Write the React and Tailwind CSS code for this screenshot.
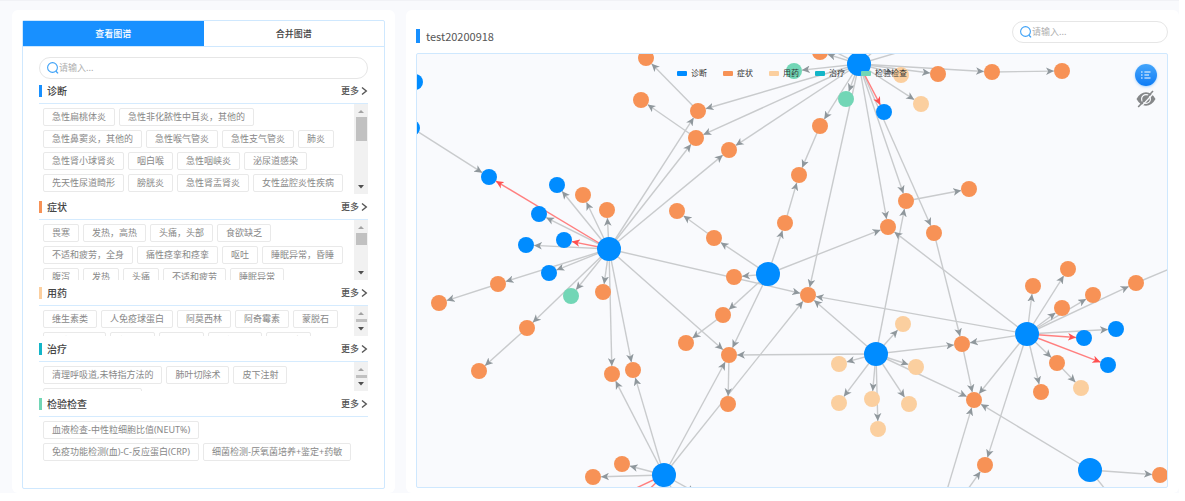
import React, { useState } from "react";
import clsx from "clsx";

const BLUE = "#008cff";
const ORANGE = "#f79256";
const PEACH = "#fbcf9f";
const GREEN = "#72d6b6";

const sections = [
  {
    title: "诊断",
    bar: "bg-[#1890ff]",
    height: "h-[90px]",
    thumb: "h-6",
    tags: [
      "急性扁桃体炎",
      "急性非化脓性中耳炎，其他的",
      "急性鼻窦炎，其他的",
      "急性喉气管炎",
      "急性支气管炎",
      "肺炎",
      "急性肾小球肾炎",
      "咽白喉",
      "急性咽峡炎",
      "泌尿道感染",
      "先天性尿道畸形",
      "膀胱炎",
      "急性肾盂肾炎",
      "女性盆腔炎性疾病",
    ],
  },
  {
    title: "症状",
    bar: "bg-[#f79256]",
    height: "h-[60px]",
    thumb: "h-3",
    tags: [
      "畏寒",
      "发热，高热",
      "头痛，头部",
      "食欲缺乏",
      "不适和疲劳，全身",
      "痛性痉挛和痉挛",
      "呕吐",
      "睡眠异常，昏睡",
      "腹泻",
      "发热",
      "头痛",
      "不适和疲劳",
      "睡眠异常",
    ],
  },
  {
    title: "用药",
    bar: "bg-[#fbcf9f]",
    height: "h-[30px]",
    thumb: "h-[3px]",
    tags: [
      "维生素类",
      "人免疫球蛋白",
      "阿莫西林",
      "阿奇霉素",
      "蒙脱石",
      "头孢克洛片",
      "氨溴索",
      "布洛芬",
      "左氧沙星",
      "红霉素",
    ],
  },
  {
    title: "治疗",
    bar: "bg-[#13b5c8]",
    height: "h-[29px]",
    thumb: "h-[3px]",
    tags: ["清理呼吸道,未特指方法的", "肺叶切除术", "皮下注射", "经皮椎间盘切除术后"],
  },
  {
    title: "检验检查",
    bar: "bg-[#72d6b6]",
    height: "h-auto",
    thumb: null,
    tags: [
      "血液检查-中性粒细胞比值(NEUT%)",
      "免疫功能检测(血)-C-反应蛋白(CRP)",
      "细菌检测-厌氧菌培养+鉴定+药敏",
    ],
  },
];

const legend = [
  { name: "诊断", color: "bg-[#008cff]" },
  { name: "症状", color: "bg-[#f79256]" },
  { name: "用药", color: "bg-[#fbcf9f]" },
  { name: "治疗", color: "bg-[#13b5c8]" },
  { name: "检验检查", color: "bg-[#72d6b6]" },
];

// id: [x, y, color, radius]
const nodes = {
  A: [859, 64, BLUE, 12],
  B: [609, 249, BLUE, 12],
  C: [768, 274, BLUE, 12],
  D: [876, 354, BLUE, 12],
  E: [1027, 334, BLUE, 12],
  F: [664, 475, BLUE, 12],
  G: [1090, 470, BLUE, 12],
  b1: [415, 82, BLUE, 8],
  b2: [412, 128, BLUE, 8],
  b3: [489, 177, BLUE, 8],
  b4: [557, 185, BLUE, 8],
  b5: [539, 214, BLUE, 8],
  b6: [564, 240, BLUE, 8],
  b7: [526, 245, BLUE, 8],
  b8: [549, 273, BLUE, 8],
  b9: [884, 112, BLUE, 8],
  b10: [1084, 338, BLUE, 8],
  b11: [1116, 329, BLUE, 8],
  b12: [1108, 365, BLUE, 8],
  o1: [646, 58, ORANGE, 8],
  o2: [641, 100, ORANGE, 8],
  o3: [698, 111, ORANGE, 8],
  o4: [696, 138, ORANGE, 8],
  o5: [729, 150, ORANGE, 8],
  o6: [583, 195, ORANGE, 8],
  o7: [607, 210, ORANGE, 8],
  o8: [677, 211, ORANGE, 8],
  o9: [714, 238, ORANGE, 8],
  o10: [734, 277, ORANGE, 8],
  o11: [723, 315, ORANGE, 8],
  o12: [686, 343, ORANGE, 8],
  o13: [729, 355, ORANGE, 8],
  o14: [728, 404, ORANGE, 8],
  o15: [498, 284, ORANGE, 8],
  o16: [439, 303, ORANGE, 8],
  o17: [603, 292, ORANGE, 8],
  o18: [527, 328, ORANGE, 8],
  o19: [479, 371, ORANGE, 8],
  o20: [612, 374, ORANGE, 8],
  o21: [633, 370, ORANGE, 8],
  o22: [593, 477, ORANGE, 8],
  o23: [622, 464, ORANGE, 8],
  o24: [820, 52, ORANGE, 8],
  o25: [938, 74, ORANGE, 8],
  o26: [992, 72, ORANGE, 8],
  o27: [1062, 71, ORANGE, 8],
  o28: [820, 126, ORANGE, 8],
  o29: [799, 175, ORANGE, 8],
  o30: [785, 223, ORANGE, 8],
  o31: [906, 201, ORANGE, 8],
  o32: [969, 189, ORANGE, 8],
  o33: [888, 227, ORANGE, 8],
  o34: [934, 233, ORANGE, 8],
  o35: [808, 295, ORANGE, 8],
  o36: [962, 344, ORANGE, 8],
  o37: [974, 400, ORANGE, 8],
  o38: [1033, 286, ORANGE, 8],
  o39: [1068, 269, ORANGE, 8],
  o40: [1093, 295, ORANGE, 8],
  o41: [1062, 308, ORANGE, 8],
  o42: [1136, 283, ORANGE, 8],
  o43: [1057, 363, ORANGE, 8],
  o44: [1041, 392, ORANGE, 8],
  o45: [985, 465, ORANGE, 8],
  o46: [1160, 475, ORANGE, 8],
  p1: [901, 75, PEACH, 8],
  p2: [921, 104, PEACH, 8],
  p3: [903, 324, PEACH, 8],
  p4: [839, 364, PEACH, 8],
  p5: [916, 367, PEACH, 8],
  p6: [839, 403, PEACH, 8],
  p7: [872, 399, PEACH, 8],
  p8: [909, 404, PEACH, 8],
  p9: [878, 429, PEACH, 8],
  p10: [1081, 388, PEACH, 8],
  g1: [794, 71, GREEN, 8],
  g2: [846, 99, GREEN, 8],
  g3: [571, 296, GREEN, 8],
  // outside of the visible area
  x1: [960, 34, ORANGE, 8],
  x2: [894, 34, ORANGE, 8],
  x3: [800, 34, ORANGE, 8],
  x4: [1196, 258, BLUE, 12],
  x5: [932, 540, BLUE, 12],
  x6: [600, 505, BLUE, 8],
  x7: [630, 508, BLUE, 8],
  x8: [702, 496, ORANGE, 8],
  x9: [1120, 508, ORANGE, 8],
  x10: [662, 497, ORANGE, 8],
  x11: [684, 510, ORANGE, 8],
};

const links = {
  A: "o3 o4 o5 o28 o24 g1 g2 p1 o25 o26 p2 o35 o31 o33 o34 x1 x2 x3",
  B: "o3 o4 o5 b4 b5 b7 b8 o6 o7 o15 g3 o17 o18 o20 o21 o13 o35",
  C: "o30 o33 o9 o10 o11 o13",
  D: "o13 o35 o36 p3 p4 p5 p6 p7 p8 p9 o37 o31",
  E: "o35 o36 o37 o45 o33 o38 o39 o40 o41 o42 b11 o43 o44",
  F: "o20 o21 o13 o35 o22 o23 x8 x10 x11",
  G: "o37 o46 x9",
  b2: "b3",
  o3: "o1",
  o4: "o2",
  o9: "o8",
  o11: "o12",
  o13: "o14",
  o15: "o16",
  o18: "o19",
  o26: "o27",
  o28: "o29",
  o30: "o29",
  o31: "o32",
  o34: "o36",
  o36: "o37",
  o42: "x4",
  o43: "p10",
  x5: "o37 o45",
};

const redLinks = { A: "b9", B: "b3 b6", E: "b10 b12", F: "x6 x7" };

const toEdges = (map, red) =>
  Object.entries(map).flatMap(([from, targets]) =>
    targets.split(" ").map((to) => ({ from, to, red }))
  );

const edges = [...toEdges(links, false), ...toEdges(redLinks, true)];

const Edge = ({ from, to, red }) => {
  const [x1, y1] = nodes[from];
  const [tx, ty, , r] = nodes[to];
  const len = Math.hypot(tx - x1, ty - y1);
  const k = (len - r) / len;
  return (
    <line
      x1={x1}
      y1={y1}
      x2={x1 + (tx - x1) * k}
      y2={y1 + (ty - y1) * k}
      stroke={red ? "#ff7f7f" : "#c9cbcd"}
      strokeWidth="1.4"
      markerEnd={red ? "url(#arrow-red)" : "url(#arrow)"}
    />
  );
};

const Arrow = ({ id, color }) => (
  <marker
    id={id}
    viewBox="0 0 8 8"
    refX="8"
    refY="4"
    markerWidth="8"
    markerHeight="8"
    markerUnits="userSpaceOnUse"
    orient="auto"
  >
    <path d="M8 4 L0 0.2 L2.2 4 L0 7.8 Z" fill={color} />
  </marker>
);

const Graph = () => (
  <svg viewBox="417 54 750 433" className="block w-full">
    <defs>
      <Arrow id="arrow" color="#8f979c" />
      <Arrow id="arrow-red" color="#ff5050" />
    </defs>
    {edges.map((edge) => (
      <Edge key={`${edge.from}-${edge.to}`} {...edge} />
    ))}
    {Object.entries(nodes).map(([id, [x, y, color, r]]) => (
      <circle key={id} cx={x} cy={y} r={r} fill={color} />
    ))}
  </svg>
);

const SearchBox = ({ id, className }) => (
  <div
    className={clsx(
      "flex h-[22px] items-center rounded-full border border-[#e6e6e6] bg-white pl-[7px] pr-3",
      className
    )}
  >
    <label htmlFor={id} aria-label="搜索">
      <svg viewBox="0 0 12 12" className="block size-3" fill="none" stroke="#3fa2f7">
        <circle cx="5.5" cy="5.5" r="4.9" strokeWidth="1.1" />
        <path d="M9 9.2 L11 11.4" strokeWidth="1.4" />
      </svg>
    </label>
    <input
      id={id}
      type="text"
      placeholder="请输入..."
      className="min-w-0 flex-1 bg-transparent text-[9px] leading-4 text-[#666] outline-none placeholder:text-[#b0b0b0]"
    />
  </div>
);

const ScrollBar = ({ thumb }) => (
  <div className="flex w-3.5 shrink-0 flex-col items-center bg-[#f1f1f1]">
    <svg viewBox="0 0 14 13" className="h-[13px] w-3.5 shrink-0">
      <path d="M4 9 L7 6 L10 9 Z" fill="#a3a3a3" />
    </svg>
    <div className={clsx("w-[11px] shrink-0 bg-[#c1c1c1]", thumb)} />
    <svg viewBox="0 0 14 13" className="mt-auto h-[13px] w-3.5 shrink-0">
      <path d="M4 4 L10 4 L7 7.5 Z" fill="#505050" />
    </svg>
  </div>
);

const Section = ({ title, bar, height, thumb, tags }) => (
  <section className="mb-px">
    <div className="flex h-[25px] items-center border-b border-[#d5ebfe]">
      <span className={clsx("h-3 w-[3px]", bar)} />
      <h3 className="ml-[5px] flex-1 text-[10px] leading-4 font-medium text-[#444]">{title}</h3>
      <button type="button" className="flex items-center gap-px text-[9px] leading-4 font-medium text-[#555]">
        更多
        <svg viewBox="0 0 8 10" className="h-2.5 w-2" fill="none" stroke="#555" strokeWidth="1.4">
          <path d="M2 1.5 L6.3 5 L2 8.5" />
        </svg>
      </button>
    </div>
    <div className={clsx("flex overflow-hidden", height)}>
      <div
        className={clsx(
          "flex flex-1 flex-wrap content-start gap-1 pt-1 pl-1",
          thumb ? "pr-1" : "pr-3.5"
        )}
      >
        {tags.map((tag) => (
          <span
            key={tag}
            className="h-[18px] rounded-xs border border-[#e9e9e9] px-2 font-['Noto_Sans','Noto_Sans_CJK_SC',sans-serif] text-[9px] leading-4 whitespace-nowrap text-[#888]"
          >
            {tag}
          </span>
        ))}
      </div>
      {thumb && <ScrollBar thumb={thumb} />}
    </div>
  </section>
);

const tabs = ["查看图谱", "合并图谱"];

const Sidebar = () => {
  const [active, setActive] = useState(0);

  return (
    <aside className="flex w-[383px] shrink-0 flex-col rounded-md bg-white px-2.5 pt-2.5 pb-1">
      <div className="flex-1 rounded-xs border border-[#cfe8fe]">
        <div className="flex h-[26px] border-b border-[#cfe8fe]">
          {tabs.map((tab, i) => (
            <button
              key={tab}
              type="button"
              onClick={() => setActive(i)}
              className={clsx(
                "flex-1 text-[9px] font-medium",
                active === i ? "bg-[#1890ff] text-white" : "text-[#444]"
              )}
            >
              {tab}
            </button>
          ))}
        </div>
        <div className="px-4 pt-2.5">
          <SearchBox id="tag-search" />
          {sections.map((section) => (
            <Section key={section.title} {...section} />
          ))}
        </div>
      </div>
    </aside>
  );
};

const GraphTools = () => (
  <div className="absolute top-2.5 right-2.5 flex flex-col items-center gap-1">
    <button
      type="button"
      aria-label="图例"
      className="flex size-[22px] items-center justify-center rounded-full bg-linear-to-b from-[#43a5fb] to-[#0a7cf5] shadow-sm shadow-[#1890ff]/30"
    >
      <svg viewBox="0 0 12 10" className="h-2.5 w-3" stroke="#fff" strokeWidth="1.2">
        <path d="M1 2 H2.6 M1 5 H2.6 M1 8 H2.6 M4.4 2 H10.5 M4.4 5 H9 M4.4 8 H10.5" />
      </svg>
    </button>
    <button type="button" aria-label="隐藏">
      <svg viewBox="0 0 20 18" className="h-[18px] w-5">
        <path d="M0.5 9 C3 4.5 6.2 2.2 10 2.2 S17 4.5 19.5 9 C17 13.5 13.8 15.8 10 15.8 S3 13.5 0.5 9 Z" fill="#858789" />
        <circle cx="10" cy="9" r="4.4" fill="none" stroke="#f9fafd" strokeWidth="1.2" />
        <path d="M4.2 17.6 L18.6 2" stroke="#f9fafd" strokeWidth="1.4" />
        <path d="M2.2 17 L17 1" stroke="#858789" strokeWidth="1.6" />
      </svg>
    </button>
  </div>
);

const GraphPanel = () => (
  <main className="min-w-0 flex-1 rounded-md bg-white pr-[11px] pb-[5px] pl-2.5">
    <div className="flex h-[43px] items-center">
      <span className="mt-2 h-3.5 w-1 bg-[#1890ff]" />
      <h2 className="mt-2 ml-1.5 flex-1 text-[11px] leading-4 text-[#555]">test20200918</h2>
      <SearchBox id="node-search" className="w-[156px]" />
    </div>
    <div className="relative overflow-hidden rounded-xs border border-[#cfe8fe] bg-[#f9fafd]">
      <Graph />
      <ul className="absolute inset-x-0 top-[11px] flex justify-center gap-4">
        {legend.map((item) => (
          <li key={item.name} className="flex items-center gap-1 text-[8px] leading-4 text-[#333]">
            <span className={clsx("h-[5px] w-2.5 rounded-[1px]", item.color)} />
            {item.name}
          </li>
        ))}
      </ul>
      <GraphTools />
    </div>
  </main>
);

export default function App() {
  return (
    <div className="bg-white pr-1.5 font-['Noto_Sans_CJK_SC',sans-serif]">
      <div className="flex gap-[11px] border-t border-[#f1f2f6] bg-[#f9fafd] pt-[9px] pl-3">
        <Sidebar />
        <GraphPanel />
      </div>
    </div>
  );
}
